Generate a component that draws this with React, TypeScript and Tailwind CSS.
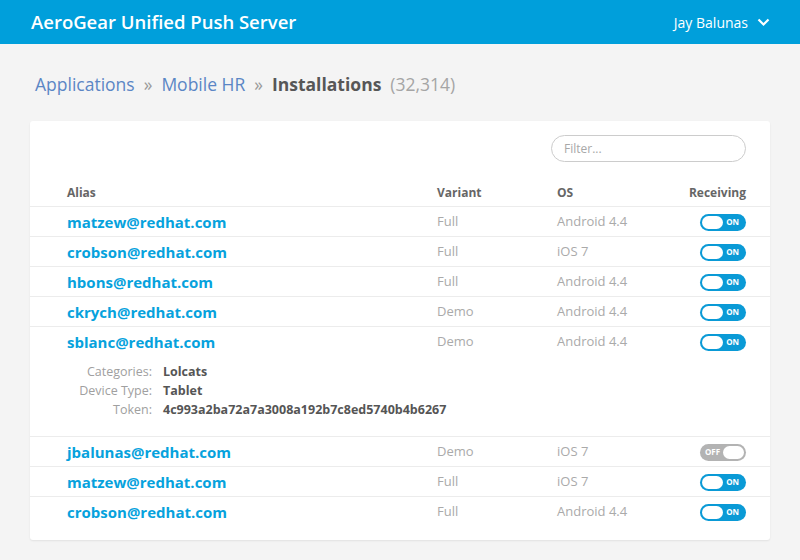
import React from "react";

type Installation = {
  alias: string;
  variant: string;
  os: string;
  on: boolean;
  details?: { categories: string; deviceType: string; token: string };
};

const rows: Installation[] = [
  { alias: "matzew@redhat.com", variant: "Full", os: "Android 4.4", on: true },
  { alias: "crobson@redhat.com", variant: "Full", os: "iOS 7", on: true },
  { alias: "hbons@redhat.com", variant: "Full", os: "Android 4.4", on: true },
  { alias: "ckrych@redhat.com", variant: "Demo", os: "Android 4.4", on: true },
  {
    alias: "sblanc@redhat.com",
    variant: "Demo",
    os: "Android 4.4",
    on: true,
    details: {
      categories: "Lolcats",
      deviceType: "Tablet",
      token: "4c993a2ba72a7a3008a192b7c8ed5740b4b6267",
    },
  },
  { alias: "jbalunas@redhat.com", variant: "Demo", os: "iOS 7", on: false },
  { alias: "matzew@redhat.com", variant: "Full", os: "iOS 7", on: true },
  { alias: "crobson@redhat.com", variant: "Full", os: "Android 4.4", on: true },
];

function Toggle({ on }: { on: boolean }) {
  if (on) {
    return (
      <div className="flex h-[17px] w-[46px] items-center rounded-full bg-[#0a9ad6] pl-[2px] pr-[7px]">
        <span className="h-[13px] w-[21px] rounded-full bg-white" />
        <span className="ml-auto text-[8px] font-bold leading-none text-white">ON</span>
      </div>
    );
  }
  return (
    <div className="flex h-[17px] w-[46px] items-center rounded-full bg-[#b3b3b3] pl-[5px] pr-[2px]">
      <span className="text-[8px] font-bold leading-none text-white">OFF</span>
      <span className="ml-auto h-[13px] w-[21px] rounded-full bg-white" />
    </div>
  );
}

function Row({ item }: { item: Installation }) {
  return (
    <div className="border-t border-[#ececec] pl-[37px] pr-[24px]">
      <div className="grid h-[29px] grid-cols-[370px_120px_1fr_auto] items-center pt-[1px]">
        <span className="text-[15px] font-bold text-[#06a2dd]">{item.alias}</span>
        <span className="text-[13px] text-[#aaaaaa]">{item.variant}</span>
        <span className="text-[13px] text-[#aaaaaa]">{item.os}</span>
        <Toggle on={item.on} />
      </div>
      {item.details && (
        <div className="grid grid-cols-[85px_1fr] gap-x-[11px] pb-[17px] pt-[6px] text-[12.5px] leading-[19px]">
          <span className="text-right text-[#a0a0a0]">Categories:</span>
          <span className="font-bold text-[#555]">{item.details.categories}</span>
          <span className="text-right text-[#a0a0a0]">Device Type:</span>
          <span className="font-bold text-[#555]">{item.details.deviceType}</span>
          <span className="text-right text-[#a0a0a0]">Token:</span>
          <span className="font-bold text-[#555]">{item.details.token}</span>
        </div>
      )}
    </div>
  );
}

export default function App() {
  return (
    <div className="min-h-[560px] bg-[#f4f4f4] font-['Open_Sans',sans-serif]">
      {/* Top bar */}
      <div className="flex h-[44px] items-center justify-between bg-[#009fdb] pl-[31px] pr-[30px]">
        <h1 className="text-[18.5px] font-semibold text-white">AeroGear Unified Push Server</h1>
        <div className="flex items-center gap-[9px] text-[14px] text-white">
          <span>Jay Balunas</span>
          <svg width="13" height="9" viewBox="0 0 13 9" fill="none">
            <path d="M1.5 1.5 6.5 6.5 11.5 1.5" stroke="white" strokeWidth="2.2" />
          </svg>
        </div>
      </div>

      {/* Breadcrumb */}
      <div className="flex h-[48px] items-center pl-[35px] pt-[34px] text-[17.5px] leading-none">
        <span className="text-[#5b86c5]">Applications</span>
        <span className="mx-[9px] text-[#9a9a9a]">»</span>
        <span className="text-[#5b86c5]">Mobile HR</span>
        <span className="mx-[9px] text-[#9a9a9a]">»</span>
        <span className="font-bold text-[#575757]">Installations</span>
        <span className="ml-[9px] text-[#a5a5a5]">(32,314)</span>
      </div>

      {/* Card */}
      <div className="mx-[30px] mt-[29px] rounded-[3px] bg-white pb-[14px] pt-[14px] shadow-[0_1px_2px_rgba(0,0,0,0.08)]">
        <div className="flex justify-end pr-[24px]">
          <div className="flex h-[27px] w-[195px] items-center rounded-full border border-[#cccccc] px-[12px] text-[12px] text-[#a8a8a8]">
            Filter...
          </div>
        </div>
        <div className="mt-[18px] grid h-[26px] grid-cols-[370px_120px_1fr_auto] items-center pl-[37px] pr-[24px] text-[12px] font-bold text-[#666]">
          <span>Alias</span>
          <span>Variant</span>
          <span>OS</span>
          <span>Receiving</span>
        </div>
        {rows.map((r, i) => (
          <Row key={i} item={r} />
        ))}
      </div>
    </div>
  );
}
